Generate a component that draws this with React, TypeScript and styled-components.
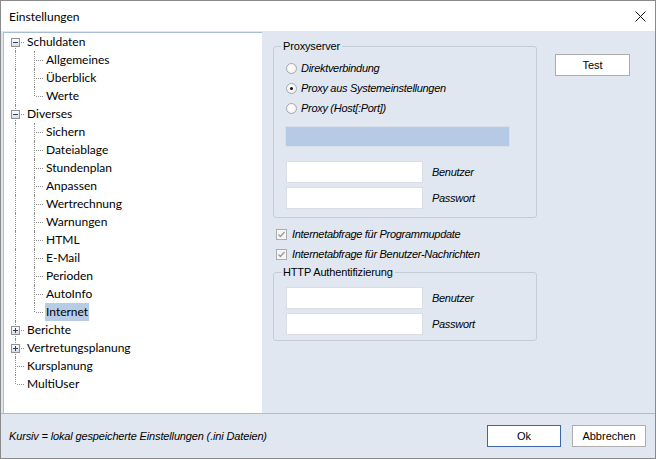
import styled, { createGlobalStyle } from "styled-components";

const GlobalStyle = createGlobalStyle`
  html, body { margin: 0; padding: 0; background: #ffffff; }
  #root { width: 656px; height: 459px; }
`;

const UI_FONT = `"Lato", "Noto Sans", sans-serif`;
const CLASSIC_FONT = `"Liberation Sans", Arial, sans-serif`;
const BG = "#e0e7f0";
const LINE = "#8e8e8e";

type VLine = "full" | "top" | "bottom" | "none";
type Cell = { v: VLine; stub?: boolean; box?: "+" | "-" };
type TreeRow = { label: string; cells: Cell[]; selected?: boolean };

const lvl0 = (label: string, v: VLine, box?: "+" | "-"): TreeRow => ({
  label,
  cells: [{ v, stub: true, box }],
});
const lvl1 = (label: string, last = false, selected = false): TreeRow => ({
  label,
  selected,
  cells: [{ v: "full" }, { v: last ? "top" : "full", stub: true }],
});

const TREE: TreeRow[] = [
  lvl0("Schuldaten", "bottom", "-"),
  lvl1("Allgemeines"),
  lvl1("Überblick"),
  lvl1("Werte", true),
  lvl0("Diverses", "full", "-"),
  lvl1("Sichern"),
  lvl1("Dateiablage"),
  lvl1("Stundenplan"),
  lvl1("Anpassen"),
  lvl1("Wertrechnung"),
  lvl1("Warnungen"),
  lvl1("HTML"),
  lvl1("E-Mail"),
  lvl1("Perioden"),
  lvl1("AutoInfo"),
  lvl1("Internet", true, true),
  lvl0("Berichte", "full", "+"),
  lvl0("Vertretungsplanung", "full", "+"),
  lvl0("Kursplanung", "full"),
  lvl0("MultiUser", "top"),
];

const Window = styled.div`
  box-sizing: border-box;
  width: 656px;
  height: 459px;
  border: 1px solid #8a8a8a;
  display: flex;
  flex-direction: column;
  background: ${BG};
  font-family: ${UI_FONT};
  color: #000;
`;

const TitleBar = styled.div`
  flex: none;
  height: 30px;
  background: #fff;
  display: flex;
  align-items: center;
  justify-content: space-between;
  padding: 0 9px 0 8px;
  font-size: 12px;
`;

const Body = styled.div`
  flex: 1;
  display: flex;
  padding: 1px 0 0 2px;
  min-height: 0;
`;

const TreePanel = styled.div`
  box-sizing: border-box;
  width: 259px;
  background: #fff;
  border-top: 1px solid #a9bcd6;
  border-left: 1px solid #a9bcd6;
  padding-left: 1px;
  font-size: 12px;
`;

const Row = styled.div`
  display: flex;
  align-items: center;
  height: 18px;
`;

const Gutter = styled.span<{ $v: VLine; $stub?: boolean }>`
  position: relative;
  flex: none;
  width: 19px;
  height: 18px;
  &::before {
    content: "";
    display: ${(p) => (p.$v === "none" ? "none" : "block")};
    position: absolute;
    left: 10px;
    top: ${(p) => (p.$v === "bottom" ? "9px" : "0")};
    height: ${(p) => (p.$v === "full" ? "18px" : "9px")};
    border-left: 1px dotted ${LINE};
  }
  &::after {
    content: "";
    display: ${(p) => (p.$stub ? "block" : "none")};
    position: absolute;
    left: 12px;
    right: 0;
    top: 9px;
    border-top: 1px dotted ${LINE};
  }
`;

const Expander = styled.span<{ $plus: boolean }>`
  position: absolute;
  z-index: 1;
  left: 6px;
  top: 5px;
  box-sizing: border-box;
  width: 9px;
  height: 9px;
  border: 1px solid #919191;
  background: linear-gradient(#ffffff, #dcdcdc);
  &::before {
    content: "";
    position: absolute;
    left: 1px;
    top: 3px;
    width: 5px;
    height: 1px;
    background: #24407a;
  }
  &::after {
    content: "";
    display: ${(p) => (p.$plus ? "block" : "none")};
    position: absolute;
    left: 3px;
    top: 1px;
    width: 1px;
    height: 5px;
    background: #24407a;
  }
`;

const NodeLabel = styled.span<{ $selected?: boolean }>`
  margin-left: 2px;
  padding: 0 1px;
  height: 18px;
  line-height: 18px;
  white-space: nowrap;
  background: ${(p) => (p.$selected ? "#b8cce6" : "transparent")};
`;

const RightPanel = styled.div`
  flex: 1;
  display: flex;
  align-items: flex-start;
  padding: 8px 0 0 11px;
  font-family: ${CLASSIC_FONT};
  font-size: 11px;
`;

const Column = styled.div`
  width: 264px;
  display: flex;
  flex-direction: column;
`;

const GroupBox = styled.fieldset<{ $pad: string }>`
  margin: 0;
  min-width: 0;
  padding: ${(p) => p.$pad};
  border: 1px solid #c6ccd6;
  border-radius: 3px;
  display: flex;
  flex-direction: column;
`;

const Legend = styled.legend`
  margin-left: -5px;
  padding: 0 2px;
  line-height: 13px;
  font-size: 11px;
  letter-spacing: -0.15px;
  color: #000;
`;

const OptionRow = styled.label<{ $h: number; $mt?: number }>`
  display: flex;
  align-items: center;
  height: ${(p) => p.$h}px;
  margin-top: ${(p) => p.$mt ?? 0}px;
  font-style: italic;
  letter-spacing: -0.3px;
  white-space: nowrap;
`;

const RadioCircle = styled.span<{ $checked?: boolean }>`
  position: relative;
  flex: none;
  box-sizing: border-box;
  width: 11px;
  height: 11px;
  border: 1px solid #a8a8a8;
  border-radius: 50%;
  background: radial-gradient(circle at 40% 35%, #ffffff, #ececec);
  margin-right: 4px;
  &::after {
    content: "";
    display: ${(p) => (p.$checked ? "block" : "none")};
    position: absolute;
    left: 3px;
    top: 3px;
    width: 3px;
    height: 3px;
    border-radius: 50%;
    background: #111;
  }
`;

const CheckBox = styled.span`
  flex: none;
  box-sizing: border-box;
  width: 11px;
  height: 11px;
  margin: 0 5px 0 3px;
  border: 1px solid #acacac;
  background: #f6f6f6;
  display: flex;
  align-items: center;
  justify-content: center;
`;

const TextBox = styled.div<{ $w: number; $h: number; $disabled?: boolean }>`
  box-sizing: border-box;
  flex: none;
  width: ${(p) => p.$w}px;
  height: ${(p) => p.$h}px;
  background: ${(p) => (p.$disabled ? "#b6c9e5" : "#ffffff")};
  border: 1px solid ${(p) => (p.$disabled ? "#d9dfe8" : "#dadde2")};
`;

const FieldRow = styled.div<{ $mt: number; $ml?: number }>`
  display: flex;
  align-items: center;
  margin-top: ${(p) => p.$mt}px;
  margin-left: ${(p) => p.$ml ?? 0}px;
`;

const FieldLabel = styled.span`
  margin-left: 9px;
  font-style: italic;
  letter-spacing: -0.3px;
`;

const Button = styled.button<{ $default?: boolean; $w: number }>`
  box-sizing: border-box;
  width: ${(p) => p.$w}px;
  height: 22px;
  padding: 0;
  background: #fff;
  border: 1px solid ${(p) => (p.$default ? "#3d64a4" : "#adadad")};
  border-radius: 0;
  font-family: ${CLASSIC_FONT};
  font-size: 11px;
  color: #000;
`;

const TestButton = styled(Button)`
  margin: 14px 0 0 18px;
`;

const Footer = styled.div`
  flex: none;
  height: 44px;
  border-top: 1px solid #a9bcd6;
  display: flex;
  align-items: center;
  padding: 0 9px 0 8px;
  font-family: ${CLASSIC_FONT};
  font-size: 11px;
`;

const Hint = styled.span`
  flex: 1;
  font-style: italic;
  letter-spacing: -0.15px;
`;

const ButtonBar = styled.div`
  display: flex;
  gap: 11px;
`;

const CloseIcon = () => (
  <svg width="11" height="11" viewBox="0 0 11 11">
    <path d="M0.5 0.5 L10.5 10.5 M10.5 0.5 L0.5 10.5" stroke="#111" strokeWidth="1" />
  </svg>
);

const CheckMark = () => (
  <svg width="9" height="9" viewBox="0 0 9 9">
    <path d="M1.5 4.5 L3.5 6.5 L7.5 2" fill="none" stroke="#9a9a9a" strokeWidth="1.3" />
  </svg>
);

const CredentialFields = ({ firstMt }: { firstMt: number }) => (
  <>
    <FieldRow $mt={firstMt}>
      <TextBox $w={137} $h={22} />
      <FieldLabel>Benutzer</FieldLabel>
    </FieldRow>
    <FieldRow $mt={4}>
      <TextBox $w={137} $h={22} />
      <FieldLabel>Passwort</FieldLabel>
    </FieldRow>
  </>
);

export default function App() {
  return (
    <>
      <GlobalStyle />
      <Window>
        <TitleBar>
          <span>Einstellungen</span>
          <CloseIcon />
        </TitleBar>
        <Body>
          <TreePanel>
            {TREE.map((row, i) => (
              <Row key={`tree_${i}`}>
                {row.cells.map((c, j) => (
                  <Gutter key={j} $v={c.v} $stub={c.stub}>
                    {c.box && <Expander $plus={c.box === "+"} />}
                  </Gutter>
                ))}
                <NodeLabel $selected={row.selected}>{row.label}</NodeLabel>
              </Row>
            ))}
          </TreePanel>
          <RightPanel>
            <Column>
              <GroupBox $pad="5px 12px 8px 12px">
                <Legend>Proxyserver</Legend>
                <OptionRow $h={20}>
                  <RadioCircle />
                  Direktverbindung
                </OptionRow>
                <OptionRow $h={20}>
                  <RadioCircle $checked />
                  Proxy aus Systemeinstellungen
                </OptionRow>
                <OptionRow $h={20}>
                  <RadioCircle />
                  Proxy (Host[:Port])
                </OptionRow>
                <FieldRow $mt={8} $ml={-1}>
                  <TextBox $w={225} $h={21} $disabled />
                </FieldRow>
                <CredentialFields firstMt={14} />
              </GroupBox>
              <OptionRow $h={20} $mt={6}>
                <CheckBox>
                  <CheckMark />
                </CheckBox>
                Internetabfrage für Programmupdate
              </OptionRow>
              <OptionRow $h={20}>
                <CheckBox>
                  <CheckMark />
                </CheckBox>
                Internetabfrage für Benutzer-Nachrichten
              </OptionRow>
              <GroupBox $pad="8px 12px 5px 12px" style={{ marginTop: 2 }}>
                <Legend>HTTP Authentifizierung</Legend>
                <CredentialFields firstMt={0} />
              </GroupBox>
            </Column>
            <TestButton $w={75}>Test</TestButton>
          </RightPanel>
        </Body>
        <Footer>
          <Hint>Kursiv = lokal gespeicherte Einstellungen (.ini Dateien)</Hint>
          <ButtonBar>
            <Button $default $w={74}>
              Ok
            </Button>
            <Button $w={74}>Abbrechen</Button>
          </ButtonBar>
        </Footer>
      </Window>
    </>
  );
}
